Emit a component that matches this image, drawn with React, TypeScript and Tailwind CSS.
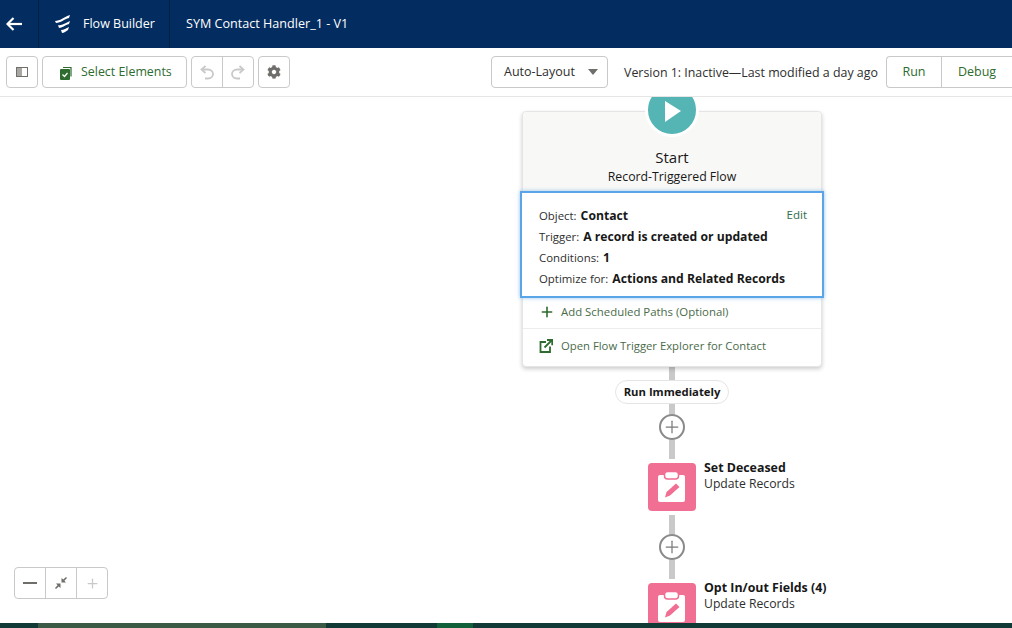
import { Plus } from 'lucide-react';
import { FaCog } from 'react-icons/fa';

const FONT = "font-['Open_Sans','Noto_Sans',sans-serif]";

function BackArrow() {
  return (
    <svg width="17" height="14" viewBox="0 0 17 14" fill="none" stroke="white" strokeWidth="2.2">
      <path d="M16 7H2" />
      <path d="M7.5 1 L1.5 7 L7.5 13" />
    </svg>
  );
}

function FlowLogo() {
  return (
    <svg width="16" height="19" viewBox="0 0 16 19" fill="white">
      <path d="M0 6 C5 6 9 2 15 0 L14 3 C9 4 6 8 1 8 Z" />
      <path d="M3 10 C7 11 10 8 15 6 L14 9 C10 10 7 13 4 13 Z" />
      <path d="M6 15 C9 15 11 13 14 12 L13 15 C11 16 9 18 7 18 Z" />
    </svg>
  );
}

function UndoIcon({ flip }: { flip?: boolean }) {
  return (
    <svg width="14" height="15" viewBox="0 0 14 15" fill="none" stroke="#c9c9c9" strokeWidth="1.8" className={flip ? '-scale-x-100' : ''}>
      <path d="M5.5 1 L1.5 4.5 L5.5 8" />
      <path d="M2 4.5 H8 C11 4.5 13 6.5 13 9 C13 11.5 11 13.5 8 13.5 H5" />
    </svg>
  );
}

function PlusCircle() {
  return (
    <div className="flex h-[26px] w-[26px] items-center justify-center rounded-full border-2 border-[#8a8a8a] bg-white">
      <Plus size={20} strokeWidth={1.5} className="text-[#7a7a7a]" />
    </div>
  );
}

function UpdateRecordsIcon() {
  return (
    <div className="h-12 w-12 shrink-0 rounded bg-[#f06f92]">
      <svg width="48" height="48" viewBox="0 0 48 48">
        <rect x="10" y="12" width="27" height="27" rx="2" fill="white" />
        <rect x="16.5" y="8.5" width="14" height="7.5" rx="3" fill="white" stroke="#f06f92" strokeWidth="1.5" />
        <path d="M17 34.5 L18.5 29 L28 20.5 L31.5 24 L22 32.5 Z" fill="#f06f92" />
      </svg>
    </div>
  );
}

function Connector({ height }: { height: string }) {
  return <div className={`w-1.5 bg-[#c9c9c9] ${height}`} />;
}

function FlowNode({ title }: { title: string }) {
  return (
    <div className="relative h-12 w-12">
      <UpdateRecordsIcon />
      <div className="absolute left-14 top-[-3px] whitespace-nowrap leading-4 text-[#181818]">
        <div className="text-[12.4px] font-bold">{title}</div>
        <div className="text-[12.2px] text-[#2e2e2e]">Update Records</div>
      </div>
    </div>
  );
}

function DetailRow({ label, value }: { label: string; value: string }) {
  return (
    <div className="flex h-[21px] items-center gap-[4px] text-[#2e2e2e]">
      <span className="text-[11.4px]">{label}</span>
      <span className="mt-[2px] text-[12.2px] font-bold text-[#181818]">{value}</span>
    </div>
  );
}

export default function App() {
  return (
    <div className={`flex h-[628px] w-[1012px] flex-col overflow-hidden bg-white ${FONT}`}>
      {/* top bar */}
      <header className="flex h-12 shrink-0 items-center bg-[#032d60] text-white">
        <div className="flex h-full w-[39px] items-center border-r border-[#02203f] pl-[6px]">
          <BackArrow />
        </div>
        <div className="flex h-full w-[131px] items-center border-r border-[#02203f] pl-[16px]">
          <FlowLogo />
          <span className="ml-[12px] text-[12.5px]">Flow Builder</span>
        </div>
        <span className="ml-4 text-[12.6px]">SYM Contact Handler_1 - V1</span>
      </header>

      {/* toolbar */}
      <div className="flex h-[49px] shrink-0 items-center border-b border-[#e5e5e5] pl-[6px] text-[12.5px]">
        <button className="flex h-8 w-8 shrink-0 items-center justify-center rounded border border-[#c9c9c9]">
          <span className="flex h-[10px] w-3 border border-[#706e6b]">
            <span className="w-1/2 bg-[#a9a7a4]" />
          </span>
        </button>
        <button className="ml-[4px] flex h-8 w-[145px] shrink-0 items-center rounded border border-[#c9c9c9] pl-[17px] text-[12.4px] text-[#2e6b2e]">
          <svg width="12" height="14" viewBox="0 0 12 14" className="mt-[1px] shrink-0">
            <path d="M3 1.5h8v9" fill="none" stroke="#2e6b2e" strokeWidth="1.2" />
            <rect x="0" y="3" width="10" height="11" rx="1" fill="#2e6b2e" />
            <path d="M2.5 8.5l2 2 3-3.5" fill="none" stroke="white" strokeWidth="1.2" />
          </svg>
          <span className="ml-[9px] whitespace-nowrap">Select Elements</span>
        </button>
        <div className="ml-[4px] flex h-8 w-[63px] shrink-0 rounded border border-[#c9c9c9]">
          <div className="flex w-[31px] items-center justify-center border-r border-[#c9c9c9]">
            <UndoIcon />
          </div>
          <div className="flex flex-1 items-center justify-center">
            <UndoIcon flip />
          </div>
        </div>
        <button className="ml-[4px] flex h-8 w-8 shrink-0 items-center justify-center rounded border border-[#c9c9c9] text-[#706e6b]">
          <FaCog size={14} />
        </button>
        <button className="ml-[201px] flex h-8 w-[117px] shrink-0 items-center justify-between rounded border border-[#c9c9c9] pl-[12px] pr-[9px] text-[#2e2e2e]">
          <span className="whitespace-nowrap">Auto-Layout</span>
          <span className="h-0 w-0 border-x-[5px] border-t-[6px] border-x-transparent border-t-[#706e6b]" />
        </button>
        <span className="ml-[16px] mt-[3px] w-[254px] shrink-0 whitespace-nowrap text-[12.4px] text-[#2e2e2e]">Version 1: Inactive—Last modified a day ago</span>
        <div className="ml-[8px] flex h-8 w-[126px] shrink-0 rounded-l border border-r-0 border-[#c9c9c9] text-[#2e6b2e]">
          <div className="flex w-[55px] items-center justify-center border-r border-[#c9c9c9]">Run</div>
          <div className="flex flex-1 items-center justify-center">Debug</div>
        </div>
      </div>

      {/* canvas */}
      <main className="relative flex-1 overflow-hidden">
        <div className="ml-[522px] flex w-[300px] flex-col items-center pt-[14px]">
          <div className="relative w-[300px] rounded border border-[#e5e5e5] bg-white shadow-[0_2px_4px_rgba(0,0,0,0.2)]">
            <div className="absolute left-[122px] top-[-29px] h-[54px] w-[54px] rounded-full border-[3px] border-white bg-[#54b5b4]">
              <svg width="48" height="48" viewBox="0 0 48 48">
                <path d="M17 15 L33 25 L17 36 Z" fill="white" />
              </svg>
            </div>
            <div className="h-[79px] rounded-t bg-[#f8f8f6] pt-[36px] text-center leading-[19px] text-[#181818]">
              <div className="text-[15px]">Start</div>
              <div className="text-[12.3px]">Record-Triggered Flow</div>
            </div>
            {/* selected details box sits slightly wider than the card */}
            <div className="relative mx-[-3px] h-[107px] border-2 border-[#5aa5e8] bg-white pl-[17px] pr-[14px] pt-[12px] shadow-[0_0_4px_rgba(90,165,232,0.6)]">
              <span className="absolute right-[15px] top-[13px] text-[11.5px] text-[#2e6b4e]">Edit</span>
              <DetailRow label="Object:" value="Contact" />
              <DetailRow label="Trigger:" value="A record is created or updated" />
              <DetailRow label="Conditions:" value="1" />
              <DetailRow label="Optimize for:" value="Actions and Related Records" />
            </div>
            <div className="flex h-[31px] items-center border-b border-[#ececec] pb-[2px] pl-[16px] text-[11.4px] text-[#4a6b4a]">
              <Plus size={16} strokeWidth={2.4} className="text-[#2e6b2e]" />
              <span className="ml-[6px]">Add Scheduled Paths (Optional)</span>
            </div>
            <div className="flex h-[37px] items-center pb-[3px] pl-[16px] text-[11.3px] text-[#4a6b4a]">
              <svg width="14" height="14" viewBox="0 0 14 14" fill="none" stroke="#2e6b2e" strokeWidth="1.8" className="shrink-0">
                <path d="M7 3H1.5V13H11V7.5" />
                <path d="M5.5 8.5L12.5 1.5" />
                <path d="M8 1H13.2V6.2" />
              </svg>
              <span className="ml-[8px] whitespace-nowrap">Open Flow Trigger Explorer for Contact</span>
            </div>
          </div>

          <Connector height="h-[13px]" />
          <div className="z-10 flex h-[24px] w-[114px] items-center justify-center rounded-full border border-[#e5e5e5] bg-white text-[11.3px] font-bold text-[#181818]">
            Run Immediately
          </div>
          <Connector height="h-[10px]" />
          <PlusCircle />
          <Connector height="h-[19px]" />
          <div className="h-[4px]" />
          <FlowNode title="Set Deceased" />
          <div className="h-[4px]" />
          <Connector height="h-[19px]" />
          <PlusCircle />
          <Connector height="h-[19px]" />
          <div className="h-[4px]" />
          <FlowNode title="Opt In/out Fields (4)" />
        </div>

        {/* zoom controls */}
        <div className="absolute left-[14px] top-[470px] flex h-8 w-[94px] rounded border border-[#c9c9c9] bg-white">
          <div className="flex w-[31px] items-center justify-center border-r border-[#c9c9c9]">
            <span className="h-[2px] w-[14px] bg-[#706e6b]" />
          </div>
          <div className="flex w-[31px] items-center justify-center border-r border-[#c9c9c9]">
            <svg width="14" height="14" viewBox="0 0 14 14" fill="#706e6b">
              <path d="M7.5 6.5V2L9.3 3.6L12 1L13 2L10.4 4.7L12 6.5Z" />
              <path d="M6.5 7.5V12L4.7 10.4L2 13L1 12L3.6 9.3L2 7.5Z" />
            </svg>
          </div>
          <div className="flex flex-1 items-center justify-center text-[#c9c9c9]">
            <Plus size={15} strokeWidth={2} />
          </div>
        </div>
      </main>

      {/* strip of whatever sits behind the window */}
      <div className="flex h-[5px] shrink-0 bg-[#113a36]">
        <div className="ml-[38px] w-[288px] bg-[#3a5a46]" />
        <div className="ml-[111px] w-[36px] bg-[#10603a]" />
      </div>
    </div>
  );
}
